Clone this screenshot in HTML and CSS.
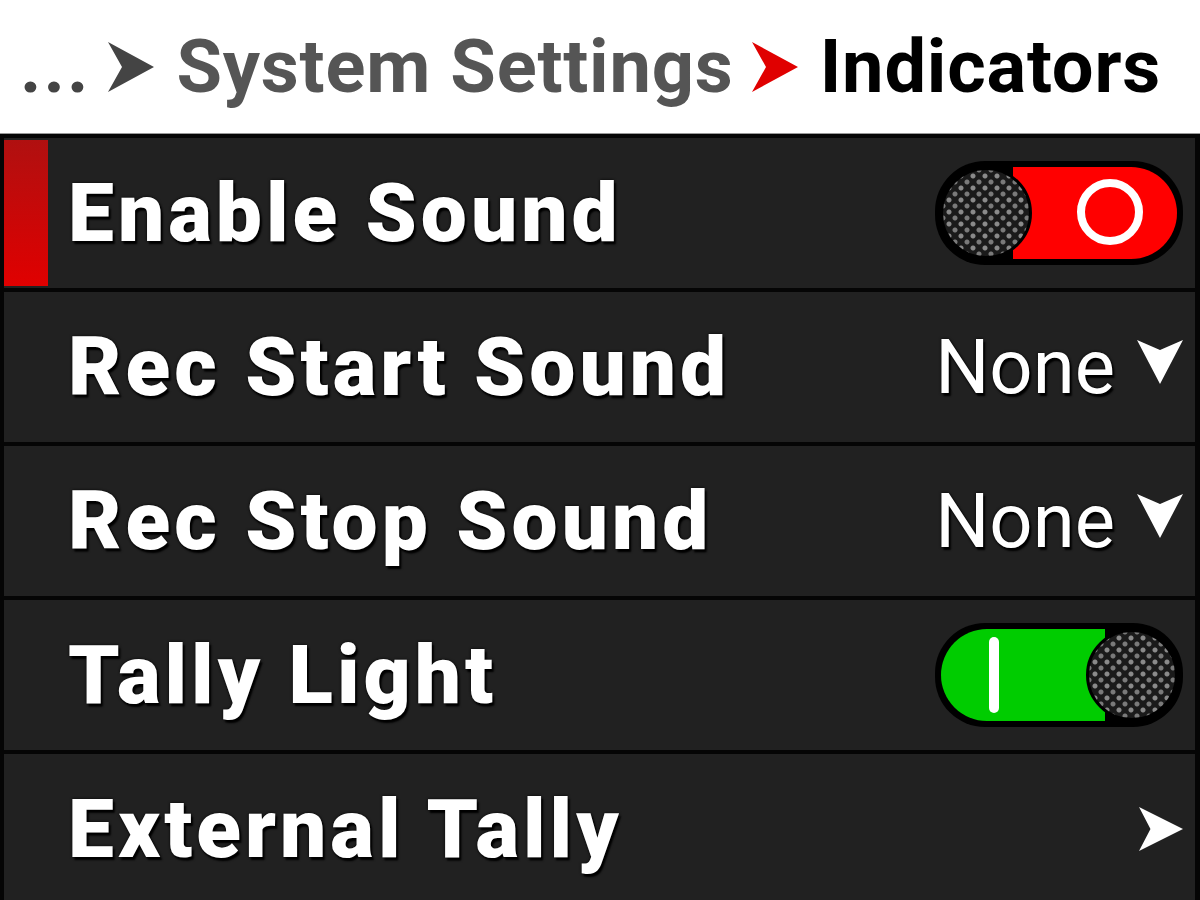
FILE: index.html
```html
<!DOCTYPE html>
<html lang="en">
<head>
    <meta charset="UTF-8">
    <title>Indicators</title>
    <link rel="stylesheet" href="styles.css">
</head>
<body>

    <!-- Breadcrumb -->
    <div class="crumbs">
        <span class="dots">...</span>
        <svg class="sep" viewBox="0 0 46 50"><path d="M0 0 L46 25 L0 50 L14 25 Z" fill="#444"/></svg>
        <span class="parent">System Settings</span>
        <svg class="sep" viewBox="0 0 46 50"><path d="M0 0 L46 25 L0 50 L14 25 Z" fill="#e00000"/></svg>
        <span class="current">Indicators</span>
    </div>

    <!-- Menu list -->
    <div class="menu">
        <div class="row selected">
            <div class="mark"></div>
            <span class="label">Enable Sound</span>
            <div class="toggle off">
                <div class="knob"></div>
                <div class="ring"></div>
            </div>
        </div>
        <div class="row">
            <span class="label">Rec Start Sound</span>
            <span class="value">None</span>
            <svg class="drop" viewBox="0 0 46 44"><path d="M0 0 L23 10 L46 0 L23 44 Z" fill="#fff"/></svg>
        </div>
        <div class="row">
            <span class="label">Rec Stop Sound</span>
            <span class="value">None</span>
            <svg class="drop" viewBox="0 0 46 44"><path d="M0 0 L23 10 L46 0 L23 44 Z" fill="#fff"/></svg>
        </div>
        <div class="row">
            <span class="label">Tally Light</span>
            <div class="toggle on">
                <div class="bar"></div>
                <div class="knob"></div>
            </div>
        </div>
        <div class="row">
            <span class="label">External Tally</span>
            <svg class="next" viewBox="0 0 46 46"><path d="M0 0 L46 23 L0 46 L12 23 Z" fill="#fff"/></svg>
        </div>
    </div>

</body>
</html>
```

FILE: styles.css
```css
body {
    margin: 0;
    background-color: #050505;
    font-family: Roboto, "Liberation Sans", sans-serif;
    width: 1200px;
    height: 900px;
    overflow: hidden;
}

/* Breadcrumb header */
.crumbs {
    height: 133px;
    background-color: #fff;
    border-bottom: 1px solid #999;
    display: flex;
    align-items: center;
    padding-left: 20px;
    font-weight: bold;
    font-size: 74px;
    letter-spacing: 0.8px;
}

.dots {
    color: #444;
    letter-spacing: 2px;
    margin-right: 18px;
}

.sep {
    width: 46px;
    height: 50px;
    margin-right: 22px;
}

.parent {
    color: #555;
    margin-right: 18px;
}

.current {
    color: #000;
}

/* Menu rows */
.menu {
    display: flex;
    flex-direction: column;
    gap: 4px;
    padding: 4px 5px 0 4px;
}

.row {
    height: 150px;
    background-color: #212121;
    display: flex;
    align-items: center;
    padding-left: 64px;
    padding-right: 12px;
    position: relative;
}

.row .mark {
    position: absolute;
    left: 0;
    top: 2px;
    bottom: 2px;
    width: 44px;
    background: linear-gradient(#b01010, #e00000);
}

.label {
    flex: 1;
    color: #fff;
    font-weight: 900;
    font-size: 82px;
    letter-spacing: 4px;
    text-shadow: 0 0 3px #000, 2px 3px 2px #000;
}

.value {
    color: #fff;
    font-size: 76px;
    text-shadow: 0 0 3px #000, 2px 3px 2px #000;
    margin-right: 22px;
}

.drop {
    width: 46px;
    height: 44px;
    margin-top: -10px;
}

.next {
    width: 44px;
    height: 46px;
}

/* Toggles */
.toggle {
    width: 238px;
    height: 94px;
    border-radius: 50px;
    background-color: #000;
    padding: 5px;
    display: flex;
    align-items: center;
    position: relative;
}

.toggle.off::before {
    content: "";
    position: absolute;
    left: 78px;
    right: 6px;
    top: 6px;
    bottom: 6px;
    background-color: #ff0000;
    border-radius: 0 46px 46px 0;
}

.toggle.on::before {
    content: "";
    position: absolute;
    left: 6px;
    right: 78px;
    top: 6px;
    bottom: 6px;
    background-color: #00cc00;
    border-radius: 46px 0 0 46px;
}

.knob {
    width: 92px;
    height: 92px;
    border-radius: 50%;
    background-color: #1a1a1a;
    background-image:
        radial-gradient(circle, #8a8a8a 2px, transparent 3px),
        radial-gradient(circle, #7a7a7a 2px, transparent 3px);
    background-size: 12px 12px;
    background-position: 0 0, 6px 6px;
    border: 3px solid #000;
    box-sizing: border-box;
    position: relative;
    z-index: 1;
}

.toggle.on .knob {
    margin-left: auto;
}

.ring {
    position: absolute;
    left: 142px;
    top: 18px;
    width: 50px;
    height: 50px;
    border: 8px solid #fff;
    border-radius: 50%;
    z-index: 1;
}

.bar {
    position: absolute;
    left: 54px;
    top: 14px;
    width: 10px;
    height: 76px;
    border-radius: 5px;
    background-color: #fff;
    z-index: 1;
}
```
